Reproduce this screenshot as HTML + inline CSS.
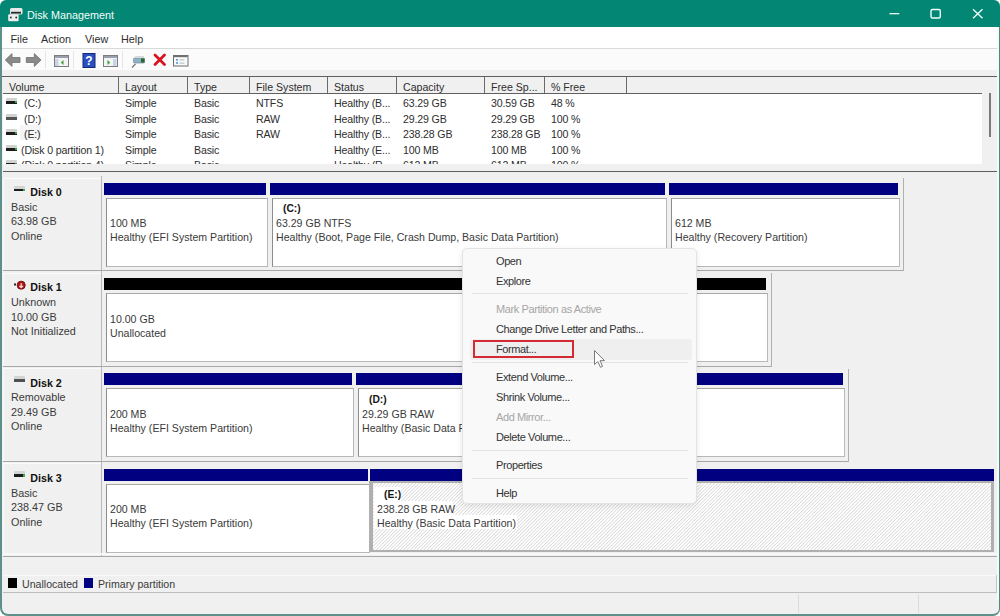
<!DOCTYPE html>
<html><head><meta charset="utf-8"><style>
html,body{margin:0;padding:0;background:#fff;}
body{width:1000px;height:616px;position:relative;overflow:hidden;font-family:"Liberation Sans", sans-serif;}
.t{position:absolute;white-space:nowrap;}
.r{position:absolute;}
.clip{position:absolute;overflow:hidden;}
</style></head><body>
<div class="r" style="left:0px;top:0px;width:1000px;height:616px;background:#f0f0f0;"></div>
<div class="r" style="left:0px;top:0px;width:1000px;height:27px;background:#038674;"></div>
<div class="r" style="left:2px;top:27px;width:996px;height:21px;background:#ffffff;"></div>
<div class="r" style="left:2px;top:48px;width:996px;height:1px;background:#d9d9d9;"></div>
<div class="r" style="left:2px;top:49px;width:996px;height:21px;background:#fbfbfb;"></div>
<div class="r" style="left:2px;top:70px;width:996px;height:6px;background:#f0f0f0;"></div>
<div class="r" style="left:2px;top:76px;width:995px;height:1px;background:#5f5f5f;"></div>
<div class="t" style="left:27px;top:7.76px;font-size:10.8px;line-height:14px;font-weight:normal;color:#f2fffc;">Disk Management</div>
<div class="t" style="left:10.5px;top:32.06px;font-size:10.8px;line-height:14px;font-weight:normal;color:#2e2e2e;">File</div>
<div class="t" style="left:41px;top:32.06px;font-size:10.8px;line-height:14px;font-weight:normal;color:#2e2e2e;">Action</div>
<div class="t" style="left:85px;top:32.06px;font-size:10.8px;line-height:14px;font-weight:normal;color:#2e2e2e;">View</div>
<div class="t" style="left:121px;top:32.06px;font-size:10.8px;line-height:14px;font-weight:normal;color:#2e2e2e;">Help</div>
<div class="r" style="left:3px;top:77px;width:979px;height:16px;background:#f0f0f0;"></div>
<div class="r" style="left:982px;top:77px;width:15px;height:88px;background:#f0f0f0;"></div>
<div class="r" style="left:3px;top:93px;width:979px;height:1px;background:#5f5f5f;"></div>
<div class="r" style="left:3px;top:94px;width:979px;height:71px;background:#ffffff;"></div>
<div class="t" style="left:9px;top:79.83px;font-size:10.6px;line-height:14px;font-weight:normal;color:#2e2e2e;">Volume</div>
<div class="t" style="left:125px;top:79.83px;font-size:10.6px;line-height:14px;font-weight:normal;color:#2e2e2e;">Layout</div>
<div class="t" style="left:194px;top:79.83px;font-size:10.6px;line-height:14px;font-weight:normal;color:#2e2e2e;">Type</div>
<div class="t" style="left:256px;top:79.83px;font-size:10.6px;line-height:14px;font-weight:normal;color:#2e2e2e;">File System</div>
<div class="t" style="left:334px;top:79.83px;font-size:10.6px;line-height:14px;font-weight:normal;color:#2e2e2e;">Status</div>
<div class="t" style="left:403px;top:79.83px;font-size:10.6px;line-height:14px;font-weight:normal;color:#2e2e2e;">Capacity</div>
<div class="t" style="left:491px;top:79.83px;font-size:10.6px;line-height:14px;font-weight:normal;color:#2e2e2e;">Free Sp...</div>
<div class="t" style="left:551px;top:79.83px;font-size:10.6px;line-height:14px;font-weight:normal;color:#2e2e2e;">% Free</div>
<div class="r" style="left:118px;top:77px;width:1px;height:16px;background:#6a6a6a;"></div>
<div class="r" style="left:187px;top:77px;width:1px;height:16px;background:#6a6a6a;"></div>
<div class="r" style="left:249px;top:77px;width:1px;height:16px;background:#6a6a6a;"></div>
<div class="r" style="left:327px;top:77px;width:1px;height:16px;background:#6a6a6a;"></div>
<div class="r" style="left:396px;top:77px;width:1px;height:16px;background:#6a6a6a;"></div>
<div class="r" style="left:484px;top:77px;width:1px;height:16px;background:#6a6a6a;"></div>
<div class="r" style="left:544px;top:77px;width:1px;height:16px;background:#6a6a6a;"></div>
<div class="r" style="left:626px;top:77px;width:1px;height:16px;background:#6a6a6a;"></div>
<div class="r" style="left:989px;top:93px;width:2px;height:44px;background:#7a7a7a;"></div>
<div class="clip" style="left:3px;top:94px;width:979px;height:70.5px;">
<div class="r" style="left:3px;top:4.0px;width:11px;height:3px;background:#d2d2d2;border-radius:1px 1px 0 0;"></div>
<div class="r" style="left:3px;top:7.0px;width:11px;height:3.2px;background:#1c1c1c;"></div>
<div class="r" style="left:12px;top:7.4px;width:1.8px;height:2px;background:#3aa845;"></div>
<div class="t" style="left:21px;top:2.43px;font-size:10.6px;line-height:14px;font-weight:normal;color:#2e2e2e;letter-spacing:-0.15px;">(C:)</div>
<div class="t" style="left:122px;top:2.43px;font-size:10.6px;line-height:14px;font-weight:normal;color:#2e2e2e;letter-spacing:-0.15px;">Simple</div>
<div class="t" style="left:191px;top:2.43px;font-size:10.6px;line-height:14px;font-weight:normal;color:#2e2e2e;letter-spacing:-0.15px;">Basic</div>
<div class="t" style="left:253px;top:2.43px;font-size:10.6px;line-height:14px;font-weight:normal;color:#2e2e2e;letter-spacing:-0.15px;">NTFS</div>
<div class="t" style="left:331px;top:2.43px;font-size:10.6px;line-height:14px;font-weight:normal;color:#2e2e2e;letter-spacing:-0.15px;">Healthy (B...</div>
<div class="t" style="left:400px;top:2.43px;font-size:10.6px;line-height:14px;font-weight:normal;color:#2e2e2e;letter-spacing:-0.15px;">63.29 GB</div>
<div class="t" style="left:488px;top:2.43px;font-size:10.6px;line-height:14px;font-weight:normal;color:#2e2e2e;letter-spacing:-0.15px;">30.59 GB</div>
<div class="t" style="left:548px;top:2.43px;font-size:10.6px;line-height:14px;font-weight:normal;color:#2e2e2e;letter-spacing:-0.15px;">48 %</div>
<div class="r" style="left:3px;top:19.5px;width:11px;height:3px;background:#d2d2d2;border-radius:1px 1px 0 0;"></div>
<div class="r" style="left:3px;top:22.5px;width:11px;height:3.2px;background:#555;"></div>
<div class="t" style="left:21px;top:17.93px;font-size:10.6px;line-height:14px;font-weight:normal;color:#2e2e2e;letter-spacing:-0.15px;">(D:)</div>
<div class="t" style="left:122px;top:17.93px;font-size:10.6px;line-height:14px;font-weight:normal;color:#2e2e2e;letter-spacing:-0.15px;">Simple</div>
<div class="t" style="left:191px;top:17.93px;font-size:10.6px;line-height:14px;font-weight:normal;color:#2e2e2e;letter-spacing:-0.15px;">Basic</div>
<div class="t" style="left:253px;top:17.93px;font-size:10.6px;line-height:14px;font-weight:normal;color:#2e2e2e;letter-spacing:-0.15px;">RAW</div>
<div class="t" style="left:331px;top:17.93px;font-size:10.6px;line-height:14px;font-weight:normal;color:#2e2e2e;letter-spacing:-0.15px;">Healthy (B...</div>
<div class="t" style="left:400px;top:17.93px;font-size:10.6px;line-height:14px;font-weight:normal;color:#2e2e2e;letter-spacing:-0.15px;">29.29 GB</div>
<div class="t" style="left:488px;top:17.93px;font-size:10.6px;line-height:14px;font-weight:normal;color:#2e2e2e;letter-spacing:-0.15px;">29.29 GB</div>
<div class="t" style="left:548px;top:17.93px;font-size:10.6px;line-height:14px;font-weight:normal;color:#2e2e2e;letter-spacing:-0.15px;">100 %</div>
<div class="r" style="left:3px;top:35.0px;width:11px;height:3px;background:#d2d2d2;border-radius:1px 1px 0 0;"></div>
<div class="r" style="left:3px;top:38.0px;width:11px;height:3.2px;background:#1c1c1c;"></div>
<div class="r" style="left:12px;top:38.4px;width:1.8px;height:2px;background:#3aa845;"></div>
<div class="t" style="left:21px;top:33.43px;font-size:10.6px;line-height:14px;font-weight:normal;color:#2e2e2e;letter-spacing:-0.15px;">(E:)</div>
<div class="t" style="left:122px;top:33.43px;font-size:10.6px;line-height:14px;font-weight:normal;color:#2e2e2e;letter-spacing:-0.15px;">Simple</div>
<div class="t" style="left:191px;top:33.43px;font-size:10.6px;line-height:14px;font-weight:normal;color:#2e2e2e;letter-spacing:-0.15px;">Basic</div>
<div class="t" style="left:253px;top:33.43px;font-size:10.6px;line-height:14px;font-weight:normal;color:#2e2e2e;letter-spacing:-0.15px;">RAW</div>
<div class="t" style="left:331px;top:33.43px;font-size:10.6px;line-height:14px;font-weight:normal;color:#2e2e2e;letter-spacing:-0.15px;">Healthy (B...</div>
<div class="t" style="left:400px;top:33.43px;font-size:10.6px;line-height:14px;font-weight:normal;color:#2e2e2e;letter-spacing:-0.15px;">238.28 GB</div>
<div class="t" style="left:488px;top:33.43px;font-size:10.6px;line-height:14px;font-weight:normal;color:#2e2e2e;letter-spacing:-0.15px;">238.28 GB</div>
<div class="t" style="left:548px;top:33.43px;font-size:10.6px;line-height:14px;font-weight:normal;color:#2e2e2e;letter-spacing:-0.15px;">100 %</div>
<div class="r" style="left:3px;top:50.5px;width:11px;height:3px;background:#d2d2d2;border-radius:1px 1px 0 0;"></div>
<div class="r" style="left:3px;top:53.5px;width:11px;height:3.2px;background:#1c1c1c;"></div>
<div class="r" style="left:12px;top:53.9px;width:1.8px;height:2px;background:#3aa845;"></div>
<div class="t" style="left:18px;top:48.93px;font-size:10.6px;line-height:14px;font-weight:normal;color:#2e2e2e;letter-spacing:-0.15px;">(Disk 0 partition 1)</div>
<div class="t" style="left:122px;top:48.93px;font-size:10.6px;line-height:14px;font-weight:normal;color:#2e2e2e;letter-spacing:-0.15px;">Simple</div>
<div class="t" style="left:191px;top:48.93px;font-size:10.6px;line-height:14px;font-weight:normal;color:#2e2e2e;letter-spacing:-0.15px;">Basic</div>
<div class="t" style="left:331px;top:48.93px;font-size:10.6px;line-height:14px;font-weight:normal;color:#2e2e2e;letter-spacing:-0.15px;">Healthy (E...</div>
<div class="t" style="left:400px;top:48.93px;font-size:10.6px;line-height:14px;font-weight:normal;color:#2e2e2e;letter-spacing:-0.15px;">100 MB</div>
<div class="t" style="left:488px;top:48.93px;font-size:10.6px;line-height:14px;font-weight:normal;color:#2e2e2e;letter-spacing:-0.15px;">100 MB</div>
<div class="t" style="left:548px;top:48.93px;font-size:10.6px;line-height:14px;font-weight:normal;color:#2e2e2e;letter-spacing:-0.15px;">100 %</div>
<div class="r" style="left:3px;top:66.0px;width:11px;height:3px;background:#d2d2d2;border-radius:1px 1px 0 0;"></div>
<div class="r" style="left:3px;top:69.0px;width:11px;height:3.2px;background:#1c1c1c;"></div>
<div class="r" style="left:12px;top:69.4px;width:1.8px;height:2px;background:#3aa845;"></div>
<div class="t" style="left:18px;top:64.43px;font-size:10.6px;line-height:14px;font-weight:normal;color:#2e2e2e;letter-spacing:-0.15px;">(Disk 0 partition 4)</div>
<div class="t" style="left:122px;top:64.43px;font-size:10.6px;line-height:14px;font-weight:normal;color:#2e2e2e;letter-spacing:-0.15px;">Simple</div>
<div class="t" style="left:191px;top:64.43px;font-size:10.6px;line-height:14px;font-weight:normal;color:#2e2e2e;letter-spacing:-0.15px;">Basic</div>
<div class="t" style="left:331px;top:64.43px;font-size:10.6px;line-height:14px;font-weight:normal;color:#2e2e2e;letter-spacing:-0.15px;">Healthy (R...</div>
<div class="t" style="left:400px;top:64.43px;font-size:10.6px;line-height:14px;font-weight:normal;color:#2e2e2e;letter-spacing:-0.15px;">612 MB</div>
<div class="t" style="left:488px;top:64.43px;font-size:10.6px;line-height:14px;font-weight:normal;color:#2e2e2e;letter-spacing:-0.15px;">612 MB</div>
<div class="t" style="left:548px;top:64.43px;font-size:10.6px;line-height:14px;font-weight:normal;color:#2e2e2e;letter-spacing:-0.15px;">100 %</div>
</div>
<div class="r" style="left:3px;top:164px;width:994px;height:7px;background:#f0f0f0;"></div>
<div class="r" style="left:3px;top:171px;width:994px;height:1px;background:#5f5f5f;"></div>
<div class="r" style="left:3px;top:177.5px;width:98px;height:1px;background:#fbfbfb;"></div>
<div class="r" style="left:3px;top:177.5px;width:1px;height:93px;background:#fbfbfb;"></div>
<div class="r" style="left:101px;top:176px;width:1px;height:95.3px;background:#b8b8b8;"></div>
<div class="r" style="left:3px;top:270.3px;width:900px;height:1px;background:#a8a8a8;"></div>
<div class="r" style="left:903px;top:178px;width:1px;height:93.3px;background:#b0b0b0;"></div>
<div class="r" style="left:13.5px;top:185.5px;width:11px;height:3px;background:#d4d4d4;border-radius:1px 1px 0 0;"></div>
<div class="r" style="left:13.5px;top:188.5px;width:11px;height:2.8px;background:#1c1c1c;"></div>
<div class="r" style="left:22.5px;top:188.5px;width:2px;height:2.8px;background:#3aa845;"></div>
<div class="t" style="left:30.3px;top:184.99px;font-size:10.7px;line-height:14px;font-weight:bold;color:#111;">Disk 0</div>
<div class="t" style="left:11px;top:199.76px;font-size:10.8px;line-height:14px;font-weight:normal;color:#3a3a3a;">Basic</div>
<div class="t" style="left:11px;top:214.26px;font-size:10.8px;line-height:14px;font-weight:normal;color:#3a3a3a;">63.98 GB</div>
<div class="t" style="left:11px;top:228.76px;font-size:10.8px;line-height:14px;font-weight:normal;color:#3a3a3a;">Online</div>
<div class="r" style="left:104px;top:182.7px;width:162px;height:12.1px;background:#000080;"></div>
<div class="r" style="left:106px;top:197.6px;width:162px;height:69.3px;box-sizing:border-box;border:1px solid #b8b8b8;border-left-color:#8c8c8c;border-top-color:#a8a8a8;background:#fff;"></div>
<div class="clip" style="left:107px;top:198.6px;width:160px;height:67.3px;">
<div class="t" style="left:3px;top:17.73px;font-size:10.6px;line-height:14px;font-weight:normal;color:#3a3a3a;">100 MB</div>
<div class="t" style="left:3px;top:31.73px;font-size:10.6px;line-height:14px;font-weight:normal;color:#3a3a3a;">Healthy (EFI System Partition)</div>
</div>
<div class="r" style="left:270px;top:182.7px;width:395px;height:12.1px;background:#000080;"></div>
<div class="r" style="left:272px;top:197.6px;width:395px;height:69.3px;box-sizing:border-box;border:1px solid #b8b8b8;border-left-color:#8c8c8c;border-top-color:#a8a8a8;background:#fff;"></div>
<div class="clip" style="left:273px;top:198.6px;width:393px;height:67.3px;">
<div class="t" style="left:10px;top:3.83px;font-size:10.3px;line-height:14px;font-weight:bold;color:#161616;">(C:)</div>
<div class="t" style="left:3px;top:17.73px;font-size:10.6px;line-height:14px;font-weight:normal;color:#3a3a3a;">63.29 GB NTFS</div>
<div class="t" style="left:3px;top:31.73px;font-size:10.6px;line-height:14px;font-weight:normal;color:#3a3a3a;">Healthy (Boot, Page File, Crash Dump, Basic Data Partition)</div>
</div>
<div class="r" style="left:669px;top:182.7px;width:229px;height:12.1px;background:#000080;"></div>
<div class="r" style="left:671px;top:197.6px;width:229px;height:69.3px;box-sizing:border-box;border:1px solid #b8b8b8;border-left-color:#8c8c8c;border-top-color:#a8a8a8;background:#fff;"></div>
<div class="clip" style="left:672px;top:198.6px;width:227px;height:67.3px;">
<div class="t" style="left:3px;top:17.73px;font-size:10.6px;line-height:14px;font-weight:normal;color:#3a3a3a;">612 MB</div>
<div class="t" style="left:3px;top:31.73px;font-size:10.6px;line-height:14px;font-weight:normal;color:#3a3a3a;">Healthy (Recovery Partition)</div>
</div>
<div class="r" style="left:3px;top:272.8px;width:98px;height:1px;background:#fbfbfb;"></div>
<div class="r" style="left:3px;top:272.8px;width:1px;height:93px;background:#fbfbfb;"></div>
<div class="r" style="left:101px;top:271.3px;width:1px;height:95.3px;background:#b8b8b8;"></div>
<div class="r" style="left:3px;top:365.6px;width:768px;height:1px;background:#a8a8a8;"></div>
<div class="r" style="left:771px;top:273.3px;width:1px;height:93.3px;background:#b0b0b0;"></div>
<svg class="r" style="left:10px;top:279.3px;" width="18" height="12" viewBox="0 0 18 12"><rect x="4" y="4.5" width="2" height="2" fill="#222"/><circle cx="11.2" cy="6.2" r="4" fill="#b01818" stroke="#7a0a0a" stroke-width="1"/><path d="M11.2 4.2 L11.2 8.6 M9.4 6.9 L11.2 8.7 L13 6.9" stroke="#ffd6d6" stroke-width="1.3" fill="none"/></svg>
<div class="t" style="left:30.3px;top:280.29px;font-size:10.7px;line-height:14px;font-weight:bold;color:#111;">Disk 1</div>
<div class="t" style="left:11px;top:295.06px;font-size:10.8px;line-height:14px;font-weight:normal;color:#3a3a3a;">Unknown</div>
<div class="t" style="left:11px;top:309.56px;font-size:10.8px;line-height:14px;font-weight:normal;color:#3a3a3a;">10.00 GB</div>
<div class="t" style="left:11px;top:324.06px;font-size:10.8px;line-height:14px;font-weight:normal;color:#3a3a3a;">Not Initialized</div>
<div class="r" style="left:104px;top:278.0px;width:662px;height:12.1px;background:#000000;"></div>
<div class="r" style="left:106px;top:292.90000000000003px;width:662px;height:69.3px;box-sizing:border-box;border:1px solid #b8b8b8;border-left-color:#8c8c8c;border-top-color:#a8a8a8;background:#fff;"></div>
<div class="clip" style="left:107px;top:293.90000000000003px;width:660px;height:67.3px;">
<div class="t" style="left:3px;top:17.73px;font-size:10.6px;line-height:14px;font-weight:normal;color:#3a3a3a;">10.00 GB</div>
<div class="t" style="left:3px;top:31.73px;font-size:10.6px;line-height:14px;font-weight:normal;color:#3a3a3a;">Unallocated</div>
</div>
<div class="r" style="left:3px;top:368.1px;width:98px;height:1px;background:#fbfbfb;"></div>
<div class="r" style="left:3px;top:368.1px;width:1px;height:93px;background:#fbfbfb;"></div>
<div class="r" style="left:101px;top:366.6px;width:1px;height:95.3px;background:#b8b8b8;"></div>
<div class="r" style="left:3px;top:460.90000000000003px;width:845px;height:1px;background:#a8a8a8;"></div>
<div class="r" style="left:848px;top:368.6px;width:1px;height:93.3px;background:#b0b0b0;"></div>
<div class="r" style="left:13.5px;top:376.1px;width:11px;height:3px;background:#d4d4d4;border-radius:1px 1px 0 0;"></div>
<div class="r" style="left:13.5px;top:379.1px;width:11px;height:2.8px;background:#505050;"></div>
<div class="t" style="left:30.3px;top:375.59px;font-size:10.7px;line-height:14px;font-weight:bold;color:#111;">Disk 2</div>
<div class="t" style="left:11px;top:390.36px;font-size:10.8px;line-height:14px;font-weight:normal;color:#3a3a3a;">Removable</div>
<div class="t" style="left:11px;top:404.86px;font-size:10.8px;line-height:14px;font-weight:normal;color:#3a3a3a;">29.49 GB</div>
<div class="t" style="left:11px;top:419.36px;font-size:10.8px;line-height:14px;font-weight:normal;color:#3a3a3a;">Online</div>
<div class="r" style="left:104px;top:373.3px;width:248px;height:12.1px;background:#000080;"></div>
<div class="r" style="left:106px;top:388.20000000000005px;width:248px;height:69.3px;box-sizing:border-box;border:1px solid #b8b8b8;border-left-color:#8c8c8c;border-top-color:#a8a8a8;background:#fff;"></div>
<div class="clip" style="left:107px;top:389.20000000000005px;width:246px;height:67.3px;">
<div class="t" style="left:3px;top:17.73px;font-size:10.6px;line-height:14px;font-weight:normal;color:#3a3a3a;">200 MB</div>
<div class="t" style="left:3px;top:31.73px;font-size:10.6px;line-height:14px;font-weight:normal;color:#3a3a3a;">Healthy (EFI System Partition)</div>
</div>
<div class="r" style="left:356px;top:373.3px;width:487px;height:12.1px;background:#000080;"></div>
<div class="r" style="left:358px;top:388.20000000000005px;width:487px;height:69.3px;box-sizing:border-box;border:1px solid #b8b8b8;border-left-color:#8c8c8c;border-top-color:#a8a8a8;background:#fff;"></div>
<div class="clip" style="left:359px;top:389.20000000000005px;width:485px;height:67.3px;">
<div class="t" style="left:10px;top:3.83px;font-size:10.3px;line-height:14px;font-weight:bold;color:#161616;">(D:)</div>
<div class="t" style="left:3px;top:17.73px;font-size:10.6px;line-height:14px;font-weight:normal;color:#3a3a3a;">29.29 GB RAW</div>
<div class="t" style="left:3px;top:31.73px;font-size:10.6px;line-height:14px;font-weight:normal;color:#3a3a3a;">Healthy (Basic Data Partition)</div>
</div>
<div class="r" style="left:3px;top:463.4px;width:98px;height:1px;background:#fbfbfb;"></div>
<div class="r" style="left:3px;top:463.4px;width:1px;height:93px;background:#fbfbfb;"></div>
<div class="r" style="left:101px;top:461.9px;width:1px;height:95.3px;background:#b8b8b8;"></div>
<div class="r" style="left:3px;top:556.1999999999999px;width:994px;height:1px;background:#a8a8a8;"></div>
<div class="r" style="left:13.5px;top:471.4px;width:11px;height:3px;background:#d4d4d4;border-radius:1px 1px 0 0;"></div>
<div class="r" style="left:13.5px;top:474.4px;width:11px;height:2.8px;background:#1c1c1c;"></div>
<div class="r" style="left:22.5px;top:474.4px;width:2px;height:2.8px;background:#3aa845;"></div>
<div class="t" style="left:30.3px;top:470.89px;font-size:10.7px;line-height:14px;font-weight:bold;color:#111;">Disk 3</div>
<div class="t" style="left:11px;top:485.66px;font-size:10.8px;line-height:14px;font-weight:normal;color:#3a3a3a;">Basic</div>
<div class="t" style="left:11px;top:500.16px;font-size:10.8px;line-height:14px;font-weight:normal;color:#3a3a3a;">238.47 GB</div>
<div class="t" style="left:11px;top:514.66px;font-size:10.8px;line-height:14px;font-weight:normal;color:#3a3a3a;">Online</div>
<div class="r" style="left:104px;top:468.59999999999997px;width:264px;height:12.1px;background:#000080;"></div>
<div class="r" style="left:106px;top:483.5px;width:264px;height:69.3px;box-sizing:border-box;border:1px solid #b8b8b8;border-left-color:#8c8c8c;border-top-color:#a8a8a8;background:#fff;"></div>
<div class="clip" style="left:107px;top:484.5px;width:262px;height:67.3px;">
<div class="t" style="left:3px;top:17.73px;font-size:10.6px;line-height:14px;font-weight:normal;color:#3a3a3a;">200 MB</div>
<div class="t" style="left:3px;top:31.73px;font-size:10.6px;line-height:14px;font-weight:normal;color:#3a3a3a;">Healthy (EFI System Partition)</div>
</div>
<div class="r" style="left:370px;top:468.59999999999997px;width:624px;height:12.1px;background:#000080;"></div>
<div class="r" style="left:368.5px;top:481px;width:625.5px;height:70.7px;box-sizing:border-box;border:3px solid #b0b0b0;border-left-width:4px;border-top-width:2.7px;border-bottom-width:2.6px;background:repeating-linear-gradient(135deg,#ffffff 0px,#ffffff 0.9px,#d6d6d6 1.6px,#ffffff 2.4px);"></div>
<div class="clip" style="left:373px;top:484.5px;width:622px;height:67.3px;">
<div class="r" style="left:0.5px;top:2.6px;width:27.5px;height:14.2px;background:#fff;"></div>
<div class="r" style="left:0.5px;top:16.6px;width:79.5px;height:14.2px;background:#fff;"></div>
<div class="r" style="left:0.5px;top:30.6px;width:143.5px;height:14.2px;background:#fff;"></div>
<div class="t" style="left:11px;top:3.83px;font-size:10.3px;line-height:14px;font-weight:bold;color:#161616;">(E:)</div>
<div class="t" style="left:4px;top:17.73px;font-size:10.6px;line-height:14px;font-weight:normal;color:#3a3a3a;">238.28 GB RAW</div>
<div class="t" style="left:4px;top:31.73px;font-size:10.6px;line-height:14px;font-weight:normal;color:#3a3a3a;">Healthy (Basic Data Partition)</div>
</div>
<div class="r" style="left:3px;top:556px;width:994px;height:1px;background:#a8a8a8;"></div>
<div class="r" style="left:3px;top:553px;width:994px;height:2px;background:#f8f8f8;"></div>
<div class="r" style="left:3px;top:574.5px;width:994px;height:1px;background:#fafafa;"></div>
<div class="r" style="left:8px;top:578px;width:9px;height:10px;background:#000;"></div>
<div class="t" style="left:22px;top:576.83px;font-size:10.6px;line-height:14px;font-weight:normal;color:#3a3a3a;">Unallocated</div>
<div class="r" style="left:84px;top:578px;width:9px;height:10px;background:#000080;"></div>
<div class="t" style="left:98px;top:576.83px;font-size:10.6px;line-height:14px;font-weight:normal;color:#3a3a3a;">Primary partition</div>
<div class="r" style="left:3px;top:591.5px;width:994px;height:1.8px;background:#bdbdbd;"></div>
<div class="r" style="left:995.5px;top:575px;width:1.2px;height:18px;background:#c4c4c4;"></div>
<div class="r" style="left:798px;top:594px;width:1px;height:19px;background:#dcdcdc;"></div>
<div class="r" style="left:918px;top:594px;width:1px;height:19px;background:#dcdcdc;"></div>
<div class="r" style="left:462px;top:248px;width:235px;height:256px;box-sizing:border-box;background:#f9f9f9;border:1px solid #e3e3e3;border-radius:5px;box-shadow:0 2px 6px rgba(0,0,0,0.10);"></div>
<div class="r" style="left:469.5px;top:339px;width:222px;height:20.5px;background:#efefef;border-radius:3px;"></div>
<div class="r" style="left:473px;top:340px;width:101px;height:18px;box-sizing:border-box;border:2px solid #d42a33;"></div>
<div class="t" style="left:496px;top:253.59px;font-size:11px;line-height:14px;font-weight:normal;color:#333;letter-spacing:-0.4px;">Open</div>
<div class="t" style="left:496px;top:273.79px;font-size:11px;line-height:14px;font-weight:normal;color:#333;letter-spacing:-0.4px;">Explore</div>
<div class="t" style="left:496px;top:302.19px;font-size:11px;line-height:14px;font-weight:normal;color:#a6a6a6;letter-spacing:-0.4px;">Mark Partition as Active</div>
<div class="t" style="left:496px;top:321.99px;font-size:11px;line-height:14px;font-weight:normal;color:#333;letter-spacing:-0.4px;">Change Drive Letter and Paths...</div>
<div class="t" style="left:496px;top:341.99px;font-size:11px;line-height:14px;font-weight:normal;color:#333;letter-spacing:-0.4px;">Format...</div>
<div class="t" style="left:496px;top:370.19px;font-size:11px;line-height:14px;font-weight:normal;color:#333;letter-spacing:-0.4px;">Extend Volume...</div>
<div class="t" style="left:496px;top:389.99px;font-size:11px;line-height:14px;font-weight:normal;color:#333;letter-spacing:-0.4px;">Shrink Volume...</div>
<div class="t" style="left:496px;top:409.99px;font-size:11px;line-height:14px;font-weight:normal;color:#a6a6a6;letter-spacing:-0.4px;">Add Mirror...</div>
<div class="t" style="left:496px;top:429.59px;font-size:11px;line-height:14px;font-weight:normal;color:#333;letter-spacing:-0.4px;">Delete Volume...</div>
<div class="t" style="left:496px;top:457.79px;font-size:11px;line-height:14px;font-weight:normal;color:#333;letter-spacing:-0.4px;">Properties</div>
<div class="t" style="left:496px;top:486.19px;font-size:11px;line-height:14px;font-weight:normal;color:#333;letter-spacing:-0.4px;">Help</div>
<div class="r" style="left:472px;top:293px;width:216px;height:1px;background:#e4e4e4;"></div>
<div class="r" style="left:472px;top:361.5px;width:216px;height:1px;background:#e4e4e4;"></div>
<div class="r" style="left:472px;top:449.5px;width:216px;height:1px;background:#e4e4e4;"></div>
<div class="r" style="left:472px;top:477.5px;width:216px;height:1px;background:#e4e4e4;"></div>
<svg class="r" style="left:590px;top:347px;" width="20" height="24" viewBox="0 0 20 24"><path d="M4.5 3.5 L4.5 17.5 L7.8 14.6 L10.5 20.3 L12.6 19.3 L10 13.7 L14.5 13.6 Z" fill="#fff" stroke="#7a7a7a" stroke-width="1" stroke-linejoin="round"/></svg>
<div class="r" style="left:20px;top:125px;width:21px;height:15px;background:rgba(0,0,0,0.04);"></div>
<div class="r" style="left:0px;top:27px;width:2px;height:589px;background:#5d9088;"></div>
<div class="r" style="left:997px;top:27px;width:1.5px;height:589px;background:#f6fbfa;"></div>
<div class="r" style="left:998.6px;top:27px;width:1.4px;height:589px;background:#4f8a80;"></div>
<div class="r" style="left:0px;top:613.5px;width:1000px;height:2.5px;background:#5d9088;"></div>
<div class="r" style="left:0;top:0;width:10px;height:10px;background:#fff;"></div>
<div class="r" style="left:0;top:0;width:16px;height:16px;background:#038674;border-top-left-radius:6px;"></div>
<div class="r" style="left:990px;top:0;width:10px;height:10px;background:#fff;"></div>
<div class="r" style="left:984px;top:0;width:16px;height:16px;background:#038674;border-top-right-radius:6px;"></div>
<div class="r" style="left:0;top:606px;width:10px;height:10px;background:#fff;"></div>
<div class="r" style="left:0;top:600px;width:16px;height:16px;box-sizing:border-box;background:#f0f0f0;border-left:2.5px solid #5d9088;border-bottom:2.5px solid #5d9088;border-bottom-left-radius:8px;"></div>
<div class="r" style="left:990px;top:606px;width:10px;height:10px;background:#fff;"></div>
<div class="r" style="left:984px;top:600px;width:16px;height:16px;box-sizing:border-box;background:#f0f0f0;border-right:1.4px solid #4f8a80;border-bottom:2.5px solid #5d9088;border-bottom-right-radius:7px;"></div>
<svg class="r" style="left:0;top:0;" width="30" height="27" viewBox="0 0 30 27"><rect x="10" y="8" width="12.5" height="6.5" rx="1.5" fill="#e8e8e8"/><rect x="11" y="11.8" width="10" height="1.8" fill="#2a2a2a"/><rect x="8.2" y="14.3" width="10.4" height="7" rx="1" fill="#eeeeee"/><circle cx="10.9" cy="17.5" r="0.9" fill="#222"/><circle cx="16.2" cy="17.5" r="0.9" fill="#222"/></svg>
<svg class="r" style="left:880px;top:0;" width="120" height="27" viewBox="0 0 120 27"><rect x="9.5" y="13" width="9.8" height="1.3" fill="#e6fbf6"/><rect x="51" y="9.5" width="9.3" height="8.5" rx="1.5" fill="none" stroke="#effffb" stroke-width="1.4"/><path d="M93 9.2 L102.5 18.3 M102.5 9.2 L93 18.3" stroke="#effffb" stroke-width="1.35"/></svg>
<svg class="r" style="left:0;top:48px;" width="200" height="24" viewBox="0 0 200 24"><path d="M5.3 12 L12 5.6 L12 9.5 L20 9.5 L20 14.5 L12 14.5 L12 18.4 Z" fill="#8a8a8a" stroke="#6e6e6e" stroke-width="0.8"/><path d="M41 12 L34.3 5.6 L34.3 9.5 L26.3 9.5 L26.3 14.5 L34.3 14.5 L34.3 18.4 Z" fill="#8a8a8a" stroke="#6e6e6e" stroke-width="0.8"/><rect x="45" y="3" width="1" height="18" fill="#e6e6e6"/><rect x="73" y="3" width="1" height="18" fill="#e6e6e6"/><rect x="122" y="3" width="1" height="18" fill="#e6e6e6"/><rect x="54.5" y="7.5" width="14" height="11" fill="#f4f4f4" stroke="#7d7d7d" stroke-width="1"/><rect x="55" y="8" width="13" height="2" fill="#9a9fb0"/><rect x="55" y="11" width="3.5" height="7" fill="#c9d3e8"/><path d="M63.5 12 L60.8 14.5 L63.5 17 Z" fill="#3aa13a"/><rect x="83" y="5.5" width="12" height="14" fill="#2a4fc0" stroke="#14287a" stroke-width="1"/><text x="89" y="17" font-family="Liberation Sans" font-weight="bold" font-size="12" fill="#fff" text-anchor="middle">?</text><rect x="103.5" y="7.5" width="14" height="11" fill="#f4f4f4" stroke="#7d7d7d" stroke-width="1"/><rect x="104" y="8" width="13" height="2" fill="#9a9fb0"/><rect x="113" y="11" width="3.5" height="7" fill="#c9d3e8"/><path d="M107.5 12 L110.2 14.5 L107.5 17 Z" fill="#3aa13a"/><path d="M132 19.5 L135.5 16" stroke="#777" stroke-width="1.3"/><rect x="133.5" y="10" width="11" height="5" rx="1" fill="#8fb0c8" stroke="#6a7f90" stroke-width="0.6"/><rect x="141" y="10.5" width="3.5" height="4" fill="#2a6a2a"/><rect x="135" y="8" width="9" height="2" fill="#d8d8d8"/><path d="M155 7 L164.5 16.5 M164.5 7 L155 16.5" stroke="#d8141e" stroke-width="2.8" stroke-linecap="round"/><rect x="173.5" y="7.5" width="14.5" height="10.5" fill="#fafafa" stroke="#6f6f6f" stroke-width="1"/><rect x="174" y="8" width="13.5" height="1.2" fill="#6f6f6f"/><rect x="176" y="11" width="2" height="1.6" fill="#5a9ad8"/><rect x="179.5" y="11.5" width="5" height="0.8" fill="#9ab"/><rect x="176" y="14.2" width="2" height="1.6" fill="#5a9ad8"/><rect x="179.5" y="14.7" width="5" height="0.8" fill="#9ab"/></svg>
</body></html>
